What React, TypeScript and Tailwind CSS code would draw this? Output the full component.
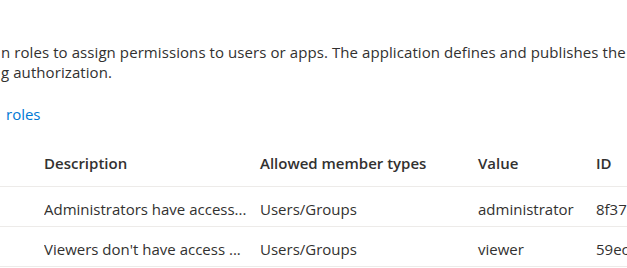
import React from 'react'

const rows = [
  {
    description: 'Administrators have access...',
    types: 'Users/Groups',
    value: 'administrator',
    id: '8f37a1c2-4d8e-4b7a-9c1e-2a6f0d3b5e91'
  },
  {
    description: "Viewers don't have access ...",
    types: 'Users/Groups',
    value: 'viewer',
    id: '59ec2b7d-1a3f-4e6c-8d2b-7f9a0c4e1b63'
  }
]

const cols = 'grid grid-cols-[44px_216px_218px_118px_31px]'

export default function App() {
  return (
    <div className="h-[268px] w-[627px] overflow-hidden bg-white font-['Open_Sans',sans-serif] text-[15px] text-[#323130]">
      <p className="mt-[42px] whitespace-nowrap pl-[1px] leading-[20px] tracking-[0.08px]">
        n roles to assign permissions to users or apps. The application defines and publishes the
        <br />
        g authorization.
      </p>
      <div className="mt-[22px] pl-[6px] leading-[20px] text-[#0078d4]">roles</div>
      <div className="mt-[17px]">
        <div className={`${cols} h-[46px] items-center border-b border-[#edebe9] font-semibold`}>
          <div />
          <div>Description</div>
          <div className="whitespace-nowrap">Allowed member types</div>
          <div>Value</div>
          <div>ID</div>
        </div>
        {rows.map((row) => (
          <div
            key={row.value}
            className={`${cols} h-[40px] items-center whitespace-nowrap border-b border-[#edebe9] pt-[6px]`}
          >
            <div />
            <div className="overflow-hidden">{row.description}</div>
            <div>{row.types}</div>
            <div>{row.value}</div>
            <div className="overflow-hidden">{row.id}</div>
          </div>
        ))}
      </div>
    </div>
  )
}
